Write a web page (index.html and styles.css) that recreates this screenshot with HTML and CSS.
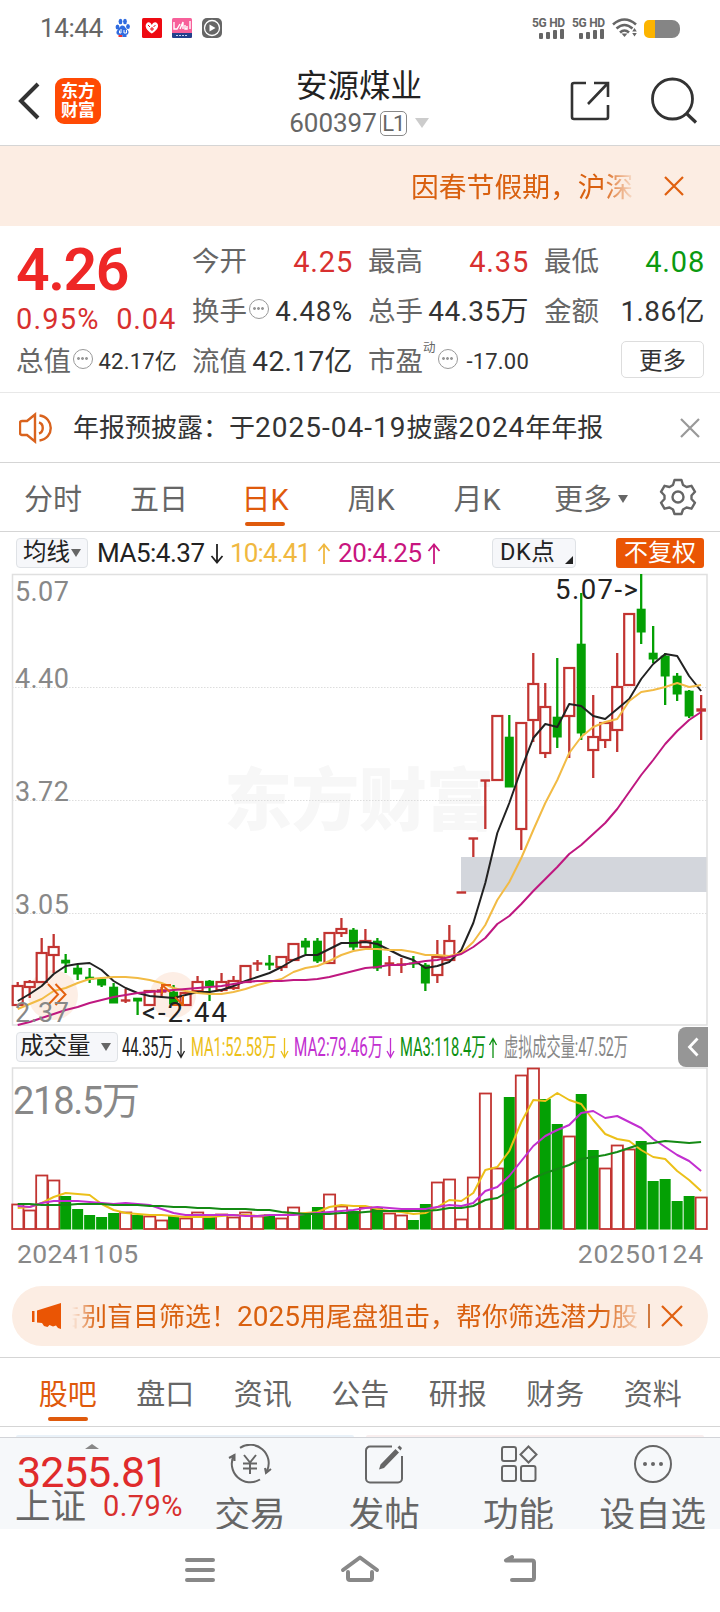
FILE: index.html
```html
<!DOCTYPE html>
<html lang="zh">
<head>
    <meta charset="UTF-8">
    <title>安源煤业 600397</title>
    <link rel="stylesheet" href="styles.css">
</head>
<body>
    <div class="status-bar">
        <span class="time">14:44</span>
        <svg class="app-icons" width="110" height="22" viewBox="0 0 110 22">
            <g fill="#2f6be0">
                <ellipse cx="2.5" cy="10" rx="1.9" ry="2.6"/><ellipse cx="5.5" cy="4.5" rx="1.9" ry="2.7"/>
                <ellipse cx="10" cy="4.5" rx="1.9" ry="2.7"/><ellipse cx="13" cy="9.5" rx="1.9" ry="2.6"/>
                <path d="M7.5 8.5c2.500 0 3 3 5 4.500s1 5-1.500 5h-7c-2.500 0-3.500-3-1.500-5s2.500-4.500 5-4.500z"/>
            </g>
            <path d="M6 12v4M4.500 13.500v2.500h1.500M9 13v3h2.500v-3" stroke="#fff" fill="none"/>
            <path d="M3.500 19h4" stroke="#e33" stroke-width="2"/><path d="M7.500 19h4" stroke="#2f6be0" stroke-width="2"/>
            <rect x="27" y="1" width="20" height="20" rx="1.500" fill="#ee0a12"/>
            <path d="M36.800 16.500C31 13 29.500 9 31.500 6.500s4.500-.5 5.300 1.500c.8-2 3.500-4 5.500-1.500s.3 6.500-5.500 10z" fill="#fff"/>
            <path d="M33 8l2 2M40.500 8l-2 2M35 12h4M37 10v4" stroke="#ee0a12" fill="none"/>
            <rect x="57" y="1" width="20" height="20" rx="1.500" fill="#f7609a"/>
            <path d="M57 16h20v3.500a1.500 1.500 0 0 1-1.500 1.500h-17a1.500 1.500 0 0 1-1.500-1.500z" fill="#22408c"/>
            <path d="M59 5v7h3l3-5M65 12l3-7v7M70 8v4h2v-3M75 4v8" stroke="#fff" stroke-width="1.400" fill="none"/>
            <path d="M61 18.500h12" stroke="#c7d2f0" stroke-dasharray="2 1"/>
            <rect x="87" y="1" width="20" height="20" rx="5" fill="#666"/>
            <circle cx="97" cy="11" r="7.500" fill="none" stroke="#fff" stroke-width="1.300"/>
            <path d="M94.500 7.500l6 3.500-6 3.500z" fill="#fff"/>
        </svg>
        <div class="signal">
            <span>5G HD</span>
            <i></i><i></i><i></i><i></i>
        </div>
        <div class="signal">
            <span>5G HD</span>
            <i></i><i></i><i></i><i></i>
        </div>
        <svg class="wifi" width="26" height="22" viewBox="0 0 26 22">
            <g fill="none" stroke="#666" stroke-width="2.600">
                <path d="M1 7.500Q12.500-2.500 24 7.500"/>
                <path d="M4.500 11.500Q12.500 4.500 20.500 11.500"/>
                <path d="M8 15.500Q12.500 11.500 17 15.500"/>
            </g>
            <path d="M9.500 16.500h6L12.500 20z" fill="#666"/>
            <path d="M22.500 11l2.300 3.500h-4.600zM22.500 19.500l2.300-3.500h-4.600z" fill="#666"/>
        </svg>
        <div class="battery"></div>
    </div>

    <div class="header">
        <svg class="back" width="24" height="38" viewBox="0 0 24 38"><path d="M21 2L4 19l17 17" fill="none" stroke="#333" stroke-width="4"/></svg>
        <div class="logo">东方<br>财富</div>
        <div class="stock">
            <div class="name">安源煤业</div>
            <div class="code">600397<span class="level">L1</span><i class="down"></i></div>
        </div>
        <svg class="share" width="40" height="40" viewBox="0 0 40 40">
            <path d="M16 2H4a2 2 0 0 0-2 2v32a2 2 0 0 0 2 2h32a2 2 0 0 0 2-2V24M24 2h14v14M38 2L18 23" fill="none" stroke="#333" stroke-width="2.600"/>
        </svg>
        <svg class="search" width="48" height="48" viewBox="0 0 48 48">
            <circle cx="22.500" cy="22" r="20" fill="none" stroke="#333" stroke-width="2.800"/>
            <path d="M36 36l10 9.500" stroke="#333" stroke-width="3.200"/>
        </svg>
    </div>

    <div class="notice">
        <div class="notice-text">因春节假期，沪深</div>
        <svg width="20" height="20" viewBox="0 0 20 20"><path d="M1 1l18 18M19 1L1 19" stroke="#e0600f" stroke-width="2.200"/></svg>
    </div>

    <div class="quote">
        <div class="price">
            <div class="last">4.26</div>
            <div class="change"><span>0.95%</span><span>0.04</span></div>
        </div>
        <div class="cell"><label>今开</label><b class="red">4.25</b></div>
        <div class="cell"><label>最高</label><b class="red">4.35</b></div>
        <div class="cell"><label>最低</label><b class="green">4.08</b></div>
        <div class="cell"><label>换手</label><i class="tip"></i><b class="mid">4.48%</b></div>
        <div class="cell"><label>总手</label><b class="big">44.35万</b></div>
        <div class="cell"><label>金额</label><b class="big">1.86亿</b></div>
        <div class="cell"><label>总值</label><i class="tip"></i><b class="small">42.17亿</b></div>
        <div class="cell"><label>流值</label><b class="big">42.17亿</b></div>
        <div class="cell"><label>市盈</label><sup>动</sup><i class="tip"></i><b class="small">-17.00</b></div>
        <div class="cell"><button class="more">更多</button></div>
    </div>

    <div class="report">
        <svg width="36" height="32" viewBox="0 0 36 32">
            <path d="M3 9h5l8-6.500v27L8 23H3a2 2 0 0 1-2-2V11a2 2 0 0 1 2-2zM20 10.500c5 1.500 5 9.500 0 11M20.500 3.500c15 2 15 23 0 25" fill="none" stroke="#d9631e" stroke-width="2.400"/>
        </svg>
        <div class="report-text">年报预披露：于<span class="num">2025-04-19</span>披露<span class="num">2024</span>年年报</div>
        <svg class="close" width="20" height="20" viewBox="0 0 20 20"><path d="M1 1l18 18M19 1L1 19" stroke="#999" stroke-width="2.200"/></svg>
    </div>

    <div class="tabs">
        <div class="tab">分时</div>
        <div class="tab">五日</div>
        <div class="tab active">日K</div>
        <div class="tab">周K</div>
        <div class="tab">月K</div>
        <div class="tab">更多<i class="caret"></i></div>
        <svg class="gear" width="38" height="38" viewBox="0 0 38 38">
            <path d="M15.500 2h7l1.500 5 3.500 2 5-1.200 3.500 6-3.500 3.700v3.500l3.500 3.700-3.500 6-5-1.200-3.500 2-1.500 4.500h-7l-1.500-4.500-3.500-2-5 1.200-3.500-6L5.500 21v-3.500L2 13.800l3.500-6 5 1.200 3.500-2z" fill="none" stroke="#666" stroke-width="2.400" stroke-linejoin="round"/>
            <circle cx="19" cy="19" r="5.500" fill="none" stroke="#666" stroke-width="2.400"/>
        </svg>
    </div>

    <div class="legend">
        <div class="select">均线<i class="caret"></i></div>
        <svg class="legend-text" width="390" height="36" viewBox="92 535 390 36">
            <g font-size="26">
                <text x="97" y="562" textLength="108" fill="#222">MA5:4.37</text>
                <text x="230" y="562" textLength="81" fill="#f0b840">10:4.41</text>
                <text x="338" y="562" textLength="84" fill="#c8157e">20:4.25</text>
            </g>
            <path class="arrow" d="M217 544v18M211.500 556l5.500 6.500 5.500-6.500" stroke="#222"/>
            <path class="arrow" d="M324 564v-19M318.500 551l5.500-6.500 5.500 6.500" stroke="#f0b840"/>
            <path class="arrow" d="M434 564v-19M428.500 551l5.500-6.500 5.500 6.500" stroke="#c8157e"/>
        </svg>
        <div class="select dk">DK点<i class="corner"></i></div>
        <div class="adjust">不复权</div>
    </div>

    <svg id="kline" width="720" height="453" viewBox="0 573 720 453"></svg>

    <div class="legend volume-legend">
        <div class="select">成交量<i class="caret"></i></div>
        <svg class="legend-text" width="516" height="36" viewBox="119 1029 516 36">
            <g font-size="25">
                <text x="122" y="1056" textLength="51" lengthAdjust="spacingAndGlyphs" fill="#222">44.35万</text>
                <text x="191" y="1056" textLength="86" lengthAdjust="spacingAndGlyphs" fill="#ecc019">MA1:52.58万</text>
                <text x="294" y="1056" textLength="89" lengthAdjust="spacingAndGlyphs" fill="#c22fd0">MA2:79.46万</text>
                <text x="400" y="1056" textLength="86" lengthAdjust="spacingAndGlyphs" fill="#0b9010">MA3:118.4万</text>
                <text x="504" y="1056" textLength="124" lengthAdjust="spacingAndGlyphs" fill="#888">虚拟成交量:47.52万</text>
            </g>
            <path class="arrow" d="M181 1038v19M177.500 1051l3.500 6.500 3.500-6.500" stroke="#222"/>
            <path class="arrow" d="M284.500 1038v19M281 1051l3.500 6.500 3.500-6.500" stroke="#ecc019"/>
            <path class="arrow" d="M390.500 1038v19M387 1051l3.500 6.500 3.500-6.500" stroke="#c22fd0"/>
            <path class="arrow" d="M493 1058v-19M489.500 1045l3.500-6.500 3.500 6.500" stroke="#0b9010"/>
        </svg>
        <div class="expand"><svg width="12" height="20" viewBox="0 0 12 20"><path d="M10.500 1.500L2.500 10l8 8.500" fill="none" stroke="#fff" stroke-width="2.800"/></svg></div>
    </div>

    <svg id="volume" width="720" height="164" viewBox="0 1067 720 164"></svg>
    <div class="dates"><span>20241105</span><span class="end">20250124</span></div>

    <div class="banner">
        <svg width="32" height="28" viewBox="0 0 32 28"><path d="M1 9h2.500v11H1zM6 8.500L30 1v26l-3-1-2-2.500-3 1-3.500-1.500-2 2-3.500-1-2-3L6 20.500z" fill="#ea5504"/></svg>
        <div class="banner-text"><span>告别盲目筛选！<span class="num">2025</span>用尾盘狙击，帮你筛选潜力股</span></div>
        <i class="divider"></i>
        <svg width="22" height="22" viewBox="0 0 22 22"><path d="M1 1l20 20M21 1L1 21" stroke="#e0600f" stroke-width="2.200"/></svg>
    </div>

    <div class="sections">
        <div class="tab active">股吧</div>
        <div class="tab">盘口</div>
        <div class="tab">资讯</div>
        <div class="tab">公告</div>
        <div class="tab">研报</div>
        <div class="tab">财务</div>
        <div class="tab">资料</div>
    </div>
    <div class="cards"><i></i><i></i></div>

    <div class="bottom-bar">
        <div class="index">
            <i class="up"></i>
            <div class="points">3255.81</div>
            <div class="index-row"><span class="index-name">上证</span><span class="index-rate">0.79%</span></div>
        </div>
        <div class="action">
            <svg width="44" height="40" viewBox="0 0 44 40">
                <path d="M12 3.800A18.500 18.500 0 0 1 39 27M32 35.500A18.500 18.500 0 0 1 6 11M1 14l5.500-3V17M43 25l-5 4-1-5M16 11l6 7.500 6-7.500M15 19.500h14M15 24.500h14M22 18.500V30"/>
            </svg>
            <span>交易</span>
        </div>
        <div class="action">
            <svg width="40" height="40" viewBox="0 0 40 40">
                <path d="M28 2.500H6A4 4 0 0 0 2 6.500v28a4 4 0 0 0 4 4h28a4 4 0 0 0 4-4V12"/>
                <path d="M15 25.500l1.500-5L31.500 5l3.500 3.500L20 24zM33.500 3.500l2-2 2.500 2.500-1.500 2.500z" fill="#666" stroke="none"/>
            </svg>
            <span>发帖</span>
        </div>
        <div class="action">
            <svg width="40" height="40" viewBox="0 0 40 40">
                <rect x="3" y="3" width="14" height="14" rx="2"/><path d="M29.500 2.500l8 8-8 8-8-8z"/>
                <rect x="3" y="22" width="14" height="15" rx="2"/><rect x="22" y="22" width="14.500" height="15" rx="2"/>
            </svg>
            <span>功能</span>
        </div>
        <div class="action">
            <svg width="40" height="40" viewBox="0 0 40 40">
                <circle cx="20" cy="20" r="18"/>
                <g fill="#666" stroke="none"><circle cx="12" cy="20" r="2"/><circle cx="20" cy="20" r="2"/><circle cx="28" cy="20" r="2"/></g>
            </svg>
            <span>设自选</span>
        </div>
    </div>

    <div class="system-nav">
        <svg width="40" height="32" viewBox="0 0 40 32"><path d="M7 6h26M7 16h26M7 26h26"/></svg>
        <svg width="40" height="32" viewBox="0 0 40 32"><path d="M3 16L20 3.500 37 16M8 18v6a2 2 0 0 0 2 2h20a2 2 0 0 0 2-2v-6"/></svg>
        <svg width="40" height="32" viewBox="0 0 40 32"><path d="M12 3L6 6.500h26a2 2 0 0 1 2 2V24a2 2 0 0 1-2 2H12"/></svg>
    </div>

    <script src="chart.js"></script>
</body>
</html>
```
FILE: styles.css
```css
* {
    box-sizing: border-box;
}
body {
    margin: 0;
    width: 720px;
    height: 1612px;
    overflow: hidden;
    background-color: #fff;
    color: #333;
    font-family: Roboto, "Noto Sans CJK SC", sans-serif;
    line-height: 1;
}
svg {
    display: block;
    flex: none;
}
svg text {
    font-family: Roboto, "Noto Sans CJK SC", sans-serif;
}
.num {
    font-size: 28px;
}
.red { color: #d8302f !important; }
.green { color: #0b9a10 !important; }

/* 状态栏 */
.status-bar {
    display: flex;
    align-items: center;
    height: 56px;
    padding: 0 40px;
    color: #666;
}
.time {
    width: 75px;
    font-size: 26px;
    letter-spacing: -0.4px;
}
.app-icons {
    margin-right: auto;
}
.signal {
    width: 32px;
    height: 22px;
    margin-right: 8px;
    display: flex;
    flex-wrap: wrap;
    align-items: flex-end;
    justify-content: flex-end;
    gap: 1px 3px;
}
.signal span {
    width: 32px;
    margin-left: -2px;
    font-size: 12px;
    font-weight: 700;
    line-height: 10px;
    white-space: nowrap;
    letter-spacing: -0.3px;
}
.signal i {
    width: 4px;
    height: 10px;
    border-radius: 1px;
    background: #666;
}
.signal i:nth-of-type(1) { height: 6px; }
.signal i:nth-of-type(2) { height: 7px; }
.signal i:nth-of-type(3) { height: 9px; }
.wifi {
    margin-right: 6px;
}
.battery {
    width: 36px;
    height: 18px;
    margin-top: 2px;
    border-radius: 5px 8px 8px 5px;
    background: linear-gradient(90deg, #fcb400 11px, #858585 11px);
}

/* 标题 */
.header {
    display: flex;
    align-items: center;
    height: 90px;
    padding: 0 22px 0 17px;
    border-bottom: 1px solid #d5d5d5;
}
.logo {
    width: 46px;
    height: 46px;
    margin-left: 14px;
    padding-top: 4px;
    border-radius: 9px;
    background: #ff4a04;
    color: #fff;
    font-size: 17px;
    font-weight: 700;
    line-height: 19px;
    text-align: center;
}
.stock {
    flex: 1;
    padding: 4px 0 0 47px;
    text-align: center;
}
.name {
    font-size: 31.5px;
    line-height: 41px;
    color: #222;
}
.code {
    display: flex;
    align-items: center;
    justify-content: center;
    height: 32px;
    font-size: 26px;
    color: #666;
}
.level {
    width: 27px;
    height: 25px;
    margin-left: 3px;
    border: 1.500px solid #888;
    border-radius: 5px;
    font-size: 22px;
    line-height: 23px;
    letter-spacing: -1px;
}
.down {
    margin-left: 8px;
    border: 7px solid transparent;
    border-top: 10px solid #ccc;
    border-bottom: 0;
}
.share { margin-right: 40px; }

.notice {
    display: flex;
    align-items: center;
    height: 80px;
    padding: 0 35px 0 411px;
    background: #fcede3;
    color: #d9600f;
}
.notice-text {
    width: 222px;
    margin-right: 31px;
    padding-top: 3px;
    font-size: 27.8px;
    line-height: 40px;
    white-space: nowrap;
    overflow: hidden;
    -webkit-mask-image: linear-gradient(90deg, #000 190px, transparent 226px);
    mask-image: linear-gradient(90deg, #000 190px, transparent 226px);
}

/* 行情 */
.quote {
    display: grid;
    grid-template-columns: repeat(4, 160px);
    grid-auto-rows: 50px;
    column-gap: 16px;
    height: 167px;
    padding: 10px 16px 0;
    border-bottom: 1px solid #e8e8e8;
}
.price {
    grid-row: span 2;
    color: #ee2726;
}
.last {
    padding-top: 4px;
    font-size: 59px;
    font-weight: 600;
    line-height: 60px;
    letter-spacing: -1.5px;
}
.change {
    display: flex;
    justify-content: space-between;
    padding: 3px 0 0;
    font-size: 29px;
    line-height: 32px;
    letter-spacing: 0.8px;
    color: #d8302f;
}
.change span:first-child {
    letter-spacing: 1.2px;
}
.cell {
    display: flex;
    align-items: center;
    white-space: nowrap;
}
.cell label {
    padding-top: 2px;
    font-size: 27.5px;
    color: #666;
}
.cell b {
    margin: 2px -1px 0 auto;
    font-size: 29px;
    font-weight: 400;
    letter-spacing: 0.8px;
    color: #333;
}
.cell b.big {
    font-size: 28px;
    letter-spacing: 0.4px;
}
.cell b.mid { font-size: 27.5px; }
.cell b.small {
    font-size: 22px;
    letter-spacing: 0.2px;
}
.cell sup {
    align-self: flex-start;
    margin-top: 5px;
    font-size: 12.5px;
    line-height: 14px;
    color: #666;
}
.tip {
    width: 20px;
    height: 20px;
    margin: -5px 0 0 2px;
    border: 1.500px solid #999;
    border-radius: 50%;
    background:
        radial-gradient(circle at 4.500px 8.500px, #999 1.200px, transparent 1.600px),
        radial-gradient(circle at 8.500px 8.500px, #999 1.200px, transparent 1.600px),
        radial-gradient(circle at 12.500px 8.500px, #999 1.200px, transparent 1.600px);
}
.more {
    width: 83px;
    height: 37px;
    margin: -4px 0 0 auto;
    padding: 0 0 2px;
    border: 1.500px solid #ddd;
    border-radius: 5px;
    background: #fff;
    font: 23.5px Roboto, "Noto Sans CJK SC", sans-serif;
    color: #333;
}

.report {
    display: flex;
    align-items: center;
    height: 70px;
    padding: 0 20px 0 19px;
    border-bottom: 1px solid #d5d5d5;
    font-size: 26px;
}
.report-text {
    flex: 1;
    padding-left: 18px;
}
.report-text .num {
    letter-spacing: 1px;
}

/* 周期切换 */
.tabs,
.sections {
    display: grid;
    align-items: center;
    height: 69px;
    border-bottom: 1px solid #d5d5d5;
}
.tabs {
    grid-template-columns: repeat(6, 106px) 84px;
}
.tab {
    position: relative;
    height: 68px;
    padding-top: 4px;
    line-height: 66px;
    font-size: 29px;
    color: #666;
    text-align: center;
    white-space: nowrap;
}
.tab.active {
    color: #df5a0c;
}
.tab.active::after {
    content: "";
    position: absolute;
    left: 50%;
    bottom: 5px;
    width: 40px;
    height: 4px;
    margin-left: -20px;
    border-radius: 2px;
    background: #df5a0c;
}
.caret {
    display: inline-block;
    border: 5px solid transparent;
    border-top: 8px solid #666;
    border-bottom: 0;
}
.tab .caret {
    margin: 0 -16px 7px 6px;
}
.gear {
    margin: 0 auto;
}

/* 指标说明 */
.legend {
    display: flex;
    align-items: center;
    height: 41px;
    padding: 0 16px;
}
.select {
    display: flex;
    align-items: center;
    justify-content: space-between;
    width: 72px;
    height: 30px;
    padding: 0 6px;
    border: 1px solid #dfe2e6;
    border-radius: 4px;
    background: #f6f7fa;
    font-size: 23.5px;
    color: #222;
    white-space: nowrap;
}
.legend-text {
    margin-left: 4px;
}
.arrow {
    fill: none;
    stroke-width: 1.800;
}
.select.dk {
    width: 84px;
    margin-left: 10px;
    padding: 0 2px 0 7px;
    letter-spacing: 0.5px;
}
.corner {
    margin-top: 14px;
    border-left: 8px solid transparent;
    border-bottom: 8px solid #222;
}
.adjust {
    width: 88px;
    height: 30px;
    margin-left: auto;
    border-radius: 3px;
    background: #ea5504;
    color: #fff;
    font-size: 24px;
    line-height: 31px;
    text-align: center;
}
.volume-legend {
    padding-right: 12px;
}
.volume-legend .select {
    width: 102px;
    padding: 0 6px 0 3px;
}
.volume-legend .legend-text {
    margin-left: 1px;
}
.volume-legend .arrow {
    stroke-width: 1.3;
}
.expand {
    display: flex;
    align-items: center;
    justify-content: center;
    width: 30px;
    height: 40px;
    margin-left: auto;
    border-radius: 8px 0 0 8px;
    background: #969696;
}
.dates {
    display: flex;
    justify-content: space-between;
    height: 55px;
    padding: 10px 16px 0 17px;
    font-size: 26.5px;
    letter-spacing: 0.3px;
    color: #888;
}
.dates .end {
    letter-spacing: 0.9px;
}

/* 广告条 */
.banner {
    display: flex;
    align-items: center;
    height: 60px;
    margin: 0 12px;
    padding: 0 25px 0 19px;
    border-radius: 30px;
    background: #fcede3;
    color: #d9600f;
    font-size: 26px;
}
.banner-text {
    display: flex;
    justify-content: flex-end;
    width: 566px;
    margin-left: 9px;
    padding-top: 2px;
    line-height: 40px;
    white-space: nowrap;
    overflow: hidden;
    -webkit-mask-image: linear-gradient(90deg, transparent, #000 25px, #000 530px, transparent 575px);
    mask-image: linear-gradient(90deg, transparent, #000 25px, #000 530px, transparent 575px);
}
.divider {
    width: 2px;
    height: 24px;
    margin: 0 11px 0 auto;
    background: #d07a40;
}
.sections {
    grid-template-columns: repeat(7, 97.5px);
    height: 70px;
    margin-top: 11px;
    padding: 0 19px;
    border-top: 1px solid #d5d5d5;
}
.cards {
    display: flex;
    justify-content: space-between;
    height: 10px;
    padding: 8px 16px 0;
}
.cards i {
    width: 338px;
    border-radius: 8px 8px 0 0;
    background: #eaf2f9;
}
.cards i + i {
    background: #f9efef;
}

/* 底部操作栏 */
.bottom-bar {
    display: grid;
    grid-template-columns: 183px repeat(4, 134.25px);
    height: 92px;
    overflow: hidden;
    border-top: 1px solid #d2d4d8;
    background: #f6f8fa;
}
.index {
    padding: 6px 0 0 17px;
}
.up {
    display: block;
    width: 0;
    margin-left: 68px;
    border: 7px solid transparent;
    border-bottom: 5px solid #888;
    border-top: 0;
}
.points {
    margin-top: 4px;
    font-size: 43px;
    line-height: 38px;
    letter-spacing: -0.8px;
    color: #e02b2b;
}
.index-row {
    display: flex;
    align-items: center;
    height: 30px;
    margin-left: -2px;
    white-space: nowrap;
}
.index-name {
    padding-top: 3px;
    font-size: 35.5px;
    color: #666;
}
.index-rate {
    margin-left: 17px;
    font-size: 29px;
    letter-spacing: 0.4px;
    color: #d8302f;
}
.action {
    display: flex;
    flex-direction: column;
    align-items: center;
    padding-top: 6px;
    font-size: 35.5px;
    color: #666;
    white-space: nowrap;
}
.action svg {
    fill: none;
    stroke: #666;
    stroke-width: 2;
}
.action span {
    margin-top: 13px;
    line-height: 36px;
}
.system-nav {
    display: flex;
    justify-content: center;
    gap: 120px;
    height: 84px;
    padding-top: 25px;
}
.system-nav svg {
    fill: none;
    stroke: #888;
    stroke-width: 4;
    stroke-linecap: round;
    stroke-linejoin: round;
}
```
FILE: chart.js
```js
const RED = '#c23431';
const GREEN = '#04a004';
const STEP = 11.99;
const LEFT = 17.7;

// [涨跌, 最高, 实体上沿, 实体下沿, 最低]
const candles = [
    ['r', 982, 986, 1005, 1005], ['r', 980, 982, 987, 998], ['r', 938, 953, 982, 983], ['r', 934, 947, 955, 973],
    ['g', 954, 960, 963, 973], ['g', 965, 968, 974, 980], ['g', 968, 977, 979, 983], ['g', 977, 979, 985, 987],
    ['g', 983, 987, 1003, 1003], ['r', 989, 1000, 1001, 1003], ['g', 998, 998, 1001, 1015], ['r', 991, 991, 1005, 1005],
    ['r', 987, 990, 992, 998], ['g', 985, 992, 1004, 1005], ['r', 993, 993, 1005, 1005], ['r', 976, 982, 991, 991],
    ['g', 980, 981, 986, 1001], ['r', 973, 982, 990, 992], ['r', 976, 981, 988, 990], ['r', 965, 966, 982, 982],
    ['r', 960, 963, 964, 971], ['g', 955, 963, 965, 970], ['r', 957, 957, 967, 971], ['r', 944, 944, 960, 960],
    ['g', 938, 941, 947, 954], ['g', 938, 941, 961, 963], ['r', 932, 933, 963, 963], ['r', 918, 929, 933, 937],
    ['g', 928, 930, 947, 950], ['r', 929, 941, 947, 947], ['g', 938, 941, 968, 971], ['r', 956, 963, 964, 976],
    ['r', 958, 964, 965, 973], ['g', 956, 963, 964, 968], ['g', 963, 965, 983, 991], ['r', 940, 957, 975, 983],
    ['r', 925, 941, 960, 960], ['r', 892, 892, 893, 892], ['r', 839, 838, 839, 857], ['r', 780, 780, 781, 829],
    ['r', 716, 716, 780, 780], ['g', 715, 737, 787, 787], ['r', 723, 723, 829, 850], ['r', 653, 684, 720, 742],
    ['r', 683, 707, 753, 758], ['g', 658, 717, 737, 748], ['r', 668, 668, 716, 758], ['g', 593, 644, 733, 740],
    ['r', 695, 737, 750, 778], ['r', 723, 723, 740, 748], ['r', 653, 687, 730, 752], ['r', 614, 614, 685, 686],
    ['g', 574, 609, 632, 644], ['g', 626, 653, 659, 663], ['g', 653, 656, 676, 705], ['g', 673, 676, 694, 701],
    ['g', 690, 691, 716, 718], ['r', 695, 709, 711, 740]
];

const ma5 = [1001, 994, 986, 974, 966, 964, 963, 970, 981, 988, 993, 996, 997, 998, 995, 992, 992, 990, 986, 981,
    977, 973, 967, 960, 955, 955, 949, 943, 943, 942, 944, 950, 956, 960, 968, 966, 962, 950, 923, 883,
    833, 803, 769, 738, 724, 727, 704, 706, 716, 719, 709, 699, 679, 664, 654, 656, 676, 691];
const ma10 = [1009, 1004, 999, 991, 988, 983, 979, 978, 977, 977, 978, 980, 983, 988, 991, 993, 994, 994, 992, 989,
    985, 982, 979, 972, 968, 966, 961, 955, 951, 949, 949, 950, 950, 952, 955, 955, 956, 953, 942, 925,
    900, 882, 858, 830, 803, 780, 753, 737, 727, 722, 719, 701, 692, 690, 687, 683, 687, 685];
const ma20 = [1025, 1022, 1018, 1014, 1010, 1007, 1003, 1000, 997, 995, 993, 992, 991, 990, 989, 988, 987, 986, 984, 982,
    981, 981, 981, 980, 980, 979, 977, 974, 971, 968, 967, 965, 965, 963, 961, 960, 957, 954, 947, 938,
    924, 916, 904, 891, 879, 867, 854, 845, 834, 823, 809, 792, 775, 760, 744, 731, 720, 712];

const volumes = [1204, 1210, 1175, 1180, 1196, 1209, 1215, 1217, 1213, 1212, 1215, 1216, 1220, 1216, 1218, 1212, 1217, 1214, 1217, 1212,
    1216, 1214, 1218, 1207, 1213, 1207, 1194, 1206, 1211, 1207, 1208, 1213, 1215, 1220, 1204, 1182, 1179, 1219, 1177, 1093,
    1168, 1097, 1075, 1068, 1099, 1124, 1136, 1094, 1150, 1168, 1145, 1149, 1141, 1181, 1179, 1201, 1196, 1197];
const volumeColors = 'rrrrgggggrgrrgrrgrrrrgrrggrrgrgrrggrrrrrrgrrggrggrrrgggggr';
const vol1 = [1208, 1207, 1203, 1197, 1193, 1194, 1195, 1204, 1210, 1213, 1214, 1215, 1215, 1216, 1217, 1217, 1217, 1216, 1215, 1215,
    1216, 1215, 1215, 1214, 1213, 1212, 1207, 1205, 1206, 1206, 1209, 1211, 1212, 1214, 1213, 1207, 1200, 1201, 1193, 1170,
    1167, 1151, 1122, 1100, 1101, 1093, 1100, 1104, 1120, 1134, 1139, 1141, 1150, 1157, 1159, 1171, 1180, 1191];
const vol2 = [1206, 1207, 1203, 1201, 1201, 1201, 1202, 1203, 1204, 1203, 1204, 1205, 1209, 1213, 1215, 1215, 1215, 1215, 1215, 1216,
    1216, 1215, 1215, 1215, 1214, 1213, 1212, 1211, 1210, 1208, 1207, 1208, 1209, 1209, 1209, 1207, 1205, 1206, 1203, 1191,
    1187, 1176, 1161, 1146, 1136, 1130, 1125, 1113, 1111, 1118, 1116, 1122, 1128, 1139, 1147, 1155, 1161, 1171];
const vol3 = [1204, 1204, 1205, 1205, 1205, 1204, 1204, 1204, 1205, 1205, 1205, 1206, 1206, 1207, 1207, 1208, 1208, 1209, 1209, 1209,
    1210, 1210, 1212, 1213, 1214, 1214, 1214, 1213, 1213, 1212, 1211, 1211, 1211, 1211, 1211, 1210, 1208, 1208, 1206, 1200,
    1198, 1191, 1185, 1178, 1173, 1169, 1165, 1159, 1157, 1155, 1152, 1148, 1144, 1143, 1141, 1142, 1143, 1142];

function getX(i) {
    return LEFT + i * STEP;
}

function line(values, color) {
    const points = values.map((y, i) => getX(i).toFixed(1) + ',' + y).join(' ');
    return `<polyline points="${points}" fill="none" stroke="${color}" stroke-width="2" stroke-linejoin="round"/>`;
}

function candle(item, i) {
    const [type, high, top, bottom, low] = item;
    const x = getX(i);
    const color = type === 'r' ? RED : GREEN;
    let s = '';
    if (top > high) s += `<path d="M${x} ${high}V${top}" stroke="${color}" stroke-width="2.3"/>`;
    if (low > bottom) s += `<path d="M${x} ${bottom}V${low}" stroke="${color}" stroke-width="2.3"/>`;
    if (type === 'r' && bottom - top < 2.5) {
        s += `<rect x="${x - 4.8}" y="${top - 0.7}" width="9.6" height="${bottom - top + 1.4}" fill="${color}"/>`;
    } else if (type === 'g') {
        s += `<rect x="${x - 4.5}" y="${top - 0.3}" width="9" height="${bottom - top + 0.8}" fill="${color}"/>`;
    } else {
        s += `<rect x="${x - 5}" y="${top}" width="10" height="${bottom - top}" fill="#fff" stroke="${color}" stroke-width="2.2"/>`;
    }
    return s;
}

function drawKline() {
    let s = '<text x="224" y="825" font-size="68" font-weight="900" fill="#f7f7f7" textLength="270">东方财富</text>';
    s += '<rect x="461" y="857" width="246" height="35" fill="#d3d6dc"/>';
    s += '<path d="M12 687.5H707M12 800.5H707M12 913.5H707" stroke="#ddd" stroke-dasharray="1.5 1.5"/>';
    s += '<path d="M12.5 574.500H707V1025H12.500z" fill="none" stroke="#e0e0e0" stroke-width="1.5"/>';
    s += '<circle cx="53" cy="995" r="25" fill="#fdeee5"/><circle cx="173" cy="995" r="23" fill="#fdeee5"/>';
    s += candles.map(candle).join('');
    s += line(ma5, '#222') + line(ma10, '#f2bb45') + line(ma20, '#bf1880');
    s += '<path d="M48 984l10 10.500-10 10.500M55.500 984l10 10.500-10 10.500M162 994v-9h9M172 1005h11v-9M162 985l8 7M175 997l8 8" fill="none" stroke="#e4600f" stroke-width="2"/>';
    [['5.07', 601], ['4.40', 688], ['3.72', 801], ['3.05', 914], ['2.37', 1022]].forEach(([t, y]) => {
        s += `<text x="15" y="${y}" font-size="27" fill="#888" letter-spacing="0.4">${t}</text>`;
    });
    s += '<text x="555" y="599" font-size="27.5" fill="#222" textLength="83">5.07-&gt;</text>';
    s += '<text x="142" y="1022" font-size="27.5" fill="#222" textLength="85">&lt;-2.44</text>';
    document.getElementById('kline').innerHTML = s;
}

function drawVolume() {
    let s = '<path d="M12.5 1230V1068H707V1230" fill="none" stroke="#e0e0e0" stroke-width="1.5"/>';
    volumes.forEach((y, i) => {
        const x = getX(i);
        if (volumeColors[i] === 'g') {
            s += `<rect x="${x - 5.5}" y="${y}" width="11" height="${1229.5 - y}" fill="${GREEN}"/>`;
        } else {
            s += `<rect x="${x - 5.5}" y="${y + 0.5}" width="11.2" height="${1228.5 - y}" fill="#fff" stroke="${RED}" stroke-width="1.8"/>`;
        }
    });
    s += line(vol1, '#ecc019') + line(vol2, '#c22fd0') + line(vol3, '#148a14');
    s += '<text x="13" y="1114" font-size="38" fill="#888" textLength="127">218.5万</text>';
    document.getElementById('volume').innerHTML = s;
}

drawKline();
drawVolume();
```
